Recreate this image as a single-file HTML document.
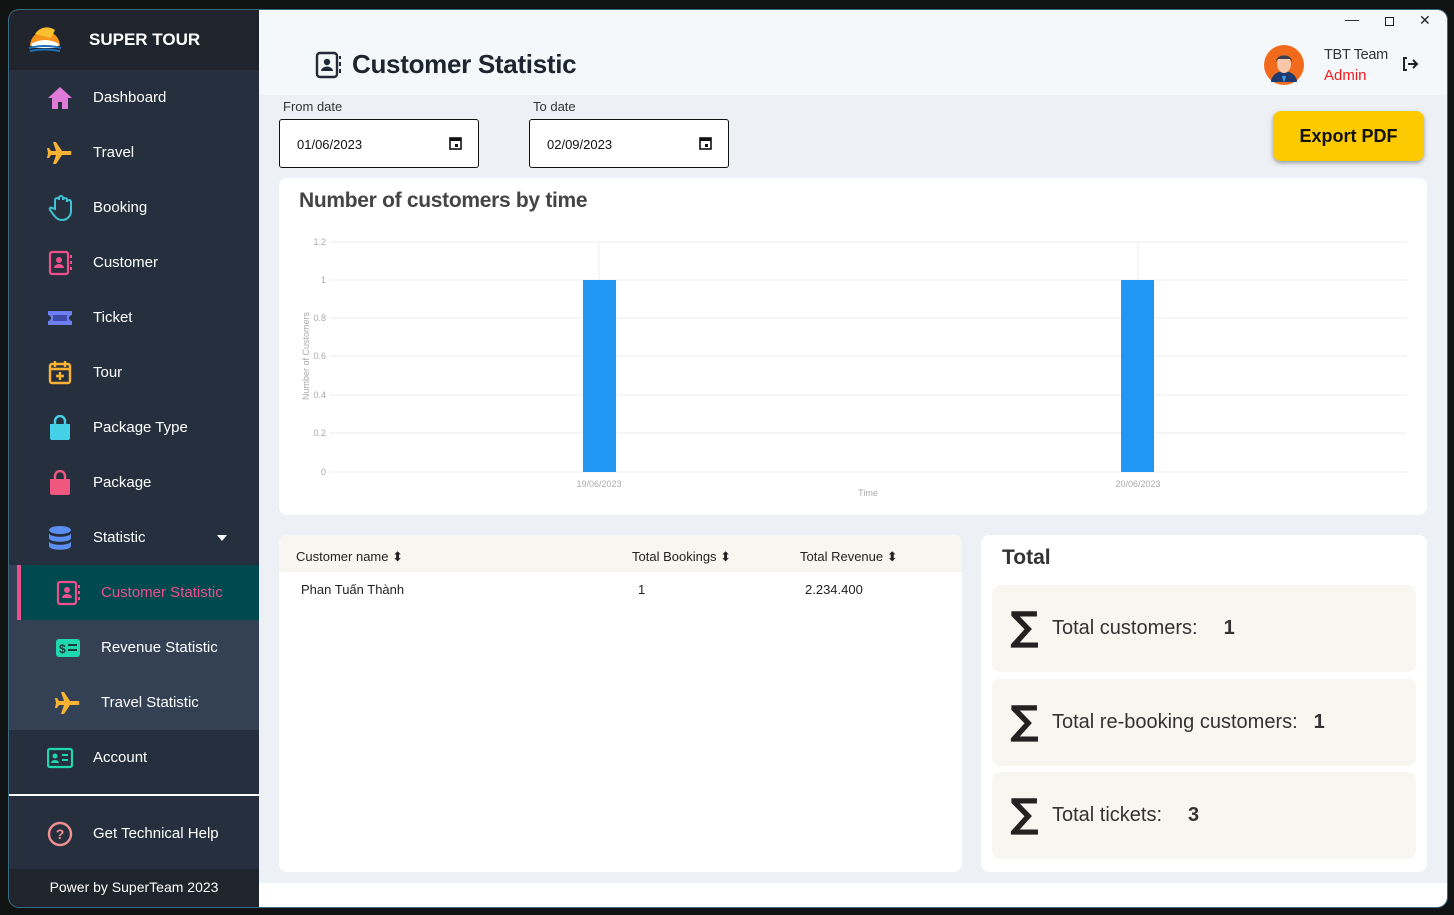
<!DOCTYPE html>
<html><head><meta charset="utf-8"><style>
*{margin:0;padding:0;box-sizing:border-box}
body{width:1454px;height:915px;background:#111313;font-family:"Liberation Sans",sans-serif;position:relative;overflow:hidden}
.a{position:absolute}
.win{left:9px;top:10px;width:1438px;height:897px;border-radius:10px;overflow:hidden;background:#fff;box-shadow:0 -1px 0 0 #3b6a80,0 0 0 1px #3b6a80}
.side{left:0;top:0;width:250px;height:898px;background:#262f3d}
.it{position:absolute;left:0;width:250px;height:55px;color:#fff;font-size:15px;display:flex;align-items:center}
.it svg{position:absolute;left:38px}
.it span{position:absolute;left:84px}
.sub span{left:92px}.sub svg{left:46px}
.sig{font-size:40px;color:#222;font-family:"DejaVu Sans",sans-serif;font-weight:bold}
</style></head><body>
<div class="a win">
 <div class="a side">
  <div class="a" style="left:0;top:-1px;width:250px;height:61px;background:#1f242d"></div>
  <svg class="a" style="left:18px;top:14px" width="36" height="30" viewBox="0 0 36 30"><path d="M3 22A15 15 0 0 1 33 22Z" fill="#f7941d"/><path d="M8 10A14 14 0 0 1 28 6L24 14Z" fill="#fbc02d"/><path d="M4 20Q18 12 32 20L30 24H6Z" fill="#fff"/><path d="M2 24Q18 20 34 24M3 27Q18 24 33 27" stroke="#1e6fb8" stroke-width="2" fill="none"/></svg>
  <div class="a" style="left:80px;top:20px;color:#fff;font-weight:bold;font-size:17px">SUPER TOUR</div>
  <div class="it" style="top:60px"><svg width="26" height="24" viewBox="0 0 26 24"><path d="M13 1L1 12h4v11h6v-7h4v7h6V12h4z" fill="#e07ad8"/></svg><span>Dashboard</span></div>
  <div class="it" style="top:115px"><svg width="26" height="24" viewBox="0 0 26 24"><path d="M1 12h22c2 0 2-2 0-2h-8L9 1H6l3 9H4L2 7H0l1 5-1 5h2l2-3h5l-3 9h3l6-9h8c2 0 2-2 0-2z" fill="#f9b233"/></svg><span>Travel</span></div>
  <div class="it" style="top:170px"><svg width="26" height="26" viewBox="0 0 26 26"><path d="M8 14V5a2 2 0 0 1 4 0V3a2 2 0 0 1 4 0v2a2 2 0 0 1 4 0v2a2 2 0 0 1 4 0v9c0 5-4 9-9 9-4 0-6-2-9-6l-3-4c-1-2 1-3 2-2z" fill="none" stroke="#3ec1d3" stroke-width="2"/></svg><span>Booking</span></div>
  <div class="it" style="top:225px"><svg width="26" height="26" viewBox="0 0 26 26"><rect x="3" y="2" width="18" height="22" rx="2" fill="none" stroke="#ef4f8c" stroke-width="2.2"/><circle cx="12" cy="10" r="3" fill="#ef4f8c"/><path d="M7 18a5 4 0 0 1 10 0z" fill="#ef4f8c"/><path d="M24 5v3M24 11v3M24 17v3" stroke="#ef4f8c" stroke-width="2"/></svg><span>Customer</span></div>
  <div class="it" style="top:280px"><svg width="26" height="24" viewBox="0 0 26 24"><path d="M1 5h24v4a3 3 0 0 0 0 6v4H1v-4a3 3 0 0 0 0-6z" fill="#6c7ef0"/><rect x="6" y="9" width="14" height="6" fill="#3e4aa8"/></svg><span>Ticket</span></div>
  <div class="it" style="top:335px"><svg width="26" height="26" viewBox="0 0 26 26"><rect x="3" y="4" width="20" height="19" rx="2" fill="none" stroke="#f9b233" stroke-width="2.4"/><path d="M8 1v6M18 1v6M3 9h20M13 12v8M9 16h8" stroke="#f9b233" stroke-width="2.4"/></svg><span>Tour</span></div>
  <div class="it" style="top:390px"><svg width="26" height="26" viewBox="0 0 26 26"><path d="M3 9h20v14a2 2 0 0 1-2 2H5a2 2 0 0 1-2-2z" fill="#45d0e8"/><path d="M8 11V6a5 5 0 0 1 10 0v5" stroke="#45d0e8" stroke-width="2.4" fill="none"/></svg><span>Package Type</span></div>
  <div class="it" style="top:445px"><svg width="26" height="26" viewBox="0 0 26 26"><path d="M3 9h20v14a2 2 0 0 1-2 2H5a2 2 0 0 1-2-2z" fill="#f0577f"/><path d="M8 11V6a5 5 0 0 1 10 0v5" stroke="#f0577f" stroke-width="2.4" fill="none"/></svg><span>Package</span></div>
  <div class="it" style="top:500px"><svg width="26" height="26" viewBox="0 0 26 26"><ellipse cx="13" cy="5" rx="11" ry="4" fill="#5b8ef0"/><path d="M2 8c0 5 22 5 22 0v5c0 5-22 5-22 0zM2 16c0 5 22 5 22 0v5c0 5-22 5-22 0z" fill="#5b8ef0"/></svg><span>Statistic</span><div class="a" style="left:208px;top:25px;border:5px solid transparent;border-top:6px solid #fff"></div></div>
  <div class="a" style="left:0;top:555px;width:250px;height:165px;background:#344154"></div>
  <div class="a" style="left:8px;top:555px;width:242px;height:55px;background:#00494f;border-left:4px solid #ef4f8c"></div>
  <div class="it sub" style="top:555px;color:#ef4f8c"><svg width="26" height="26" viewBox="0 0 26 26"><rect x="3" y="2" width="18" height="22" rx="2" fill="none" stroke="#ef4f8c" stroke-width="2.2"/><circle cx="12" cy="10" r="3" fill="#ef4f8c"/><path d="M7 18a5 4 0 0 1 10 0z" fill="#ef4f8c"/><path d="M24 5v3M24 11v3M24 17v3" stroke="#ef4f8c" stroke-width="2"/></svg><span>Customer Statistic</span></div>
  <div class="it sub" style="top:610px"><svg width="26" height="22" viewBox="0 0 26 22"><rect x="1" y="2" width="24" height="18" rx="3" fill="#1fd8b0"/><text x="4" y="16" font-size="12" font-weight="bold" fill="#1b3a3a" font-family="Liberation Sans">$</text><path d="M13 8h9M13 13h9" stroke="#1b3a3a" stroke-width="2"/></svg><span>Revenue Statistic</span></div>
  <div class="it sub" style="top:665px"><svg width="26" height="24" viewBox="0 0 26 24"><path d="M1 12h22c2 0 2-2 0-2h-8L9 1H6l3 9H4L2 7H0l1 5-1 5h2l2-3h5l-3 9h3l6-9h8c2 0 2-2 0-2z" fill="#f9b233"/></svg><span>Travel Statistic</span></div>
  <div class="it" style="top:720px"><svg width="26" height="22" viewBox="0 0 26 22"><rect x="1" y="2" width="24" height="18" rx="2" fill="none" stroke="#1fd8b0" stroke-width="2.2"/><circle cx="8" cy="9" r="2.5" fill="#1fd8b0"/><path d="M4 16a4 3 0 0 1 8 0z" fill="#1fd8b0"/><path d="M15 8h6M15 13h6" stroke="#1fd8b0" stroke-width="2"/></svg><span>Account</span></div>
  <div class="a" style="left:0;top:784px;width:250px;height:2px;background:#fff"></div>
  <div class="it" style="top:796px"><svg width="26" height="26" viewBox="0 0 26 26"><circle cx="13" cy="13" r="11" fill="none" stroke="#f09090" stroke-width="2.4"/><text x="13" y="18" text-anchor="middle" font-size="14" font-weight="bold" fill="#f09090" font-family="Liberation Sans">?</text></svg><span>Get Technical Help</span></div>
  <div class="a" style="left:0;top:859px;width:250px;height:38px;background:#1f242d;color:#fff;font-size:14px;text-align:center;line-height:36px">Power by SuperTeam 2023</div>
 </div>
 <div class="a" style="left:250px;top:-1px;width:1188px;height:86px;background:#f5f8fb"></div>
 <div class="a" style="left:250px;top:85px;width:1188px;height:788px;background:#edf0f4"></div>
 <div class="a" style="left:1336px;top:1px;font-size:14px;color:#222">—</div>
 <div class="a" style="left:1376px;top:7px;width:9px;height:9px;border:1.5px solid #222"></div>
 <div class="a" style="left:1410px;top:2px;font-size:14px;color:#222">✕</div>
 <svg class="a" style="left:306px;top:41px" width="28" height="28" viewBox="0 0 28 28"><rect x="2" y="2" width="20" height="24" rx="3" fill="none" stroke="#222a35" stroke-width="2.4"/><circle cx="12" cy="11" r="3.2" fill="#222a35"/><path d="M6 20a6 4.5 0 0 1 12 0z" fill="#222a35"/><path d="M25 5v3M25 11v4M25 18v4" stroke="#222a35" stroke-width="2"/></svg>
 <div class="a" style="left:343px;top:39px;font-size:26px;font-weight:bold;color:#1e2530;letter-spacing:-0.3px">Customer Statistic</div>
 <svg class="a" style="left:1254px;top:34px" width="42" height="42" viewBox="0 0 42 42"><circle cx="21" cy="21" r="20" fill="#f26a1b"/><path d="M8 38a13 11 0 0 1 26 0z" fill="#1e3a6e"/><path d="M19 32h4l-2 7z" fill="#3aa0f0"/><ellipse cx="21" cy="20" rx="7" ry="9" fill="#f6c7a8"/><path d="M13 18c0-9 16-9 16 0l-2-3h-12z" fill="#3a3f4a"/></svg>
 <div class="a" style="left:1315px;top:37px;font-size:14.5px;color:#333;letter-spacing:-0.3px">TBT Team</div>
 <div class="a" style="left:1315px;top:57px;font-size:15px;color:#f01c1c">Admin</div>
 <svg class="a" style="left:1392px;top:46px" width="18" height="16" viewBox="0 0 18 16"><path d="M6 2H3v12h3" fill="none" stroke="#222" stroke-width="2"/><path d="M7 8h9M12 4l4 4-4 4" fill="none" stroke="#222" stroke-width="2"/></svg>
 <div class="a" style="left:274px;top:89px;font-size:13px;color:#333">From date</div>
 <div class="a" style="left:524px;top:89px;font-size:13px;color:#333">To date</div>
 <div class="a" style="left:270px;top:109px;width:200px;height:49px;border:1px solid #111;border-radius:3px;background:#fff;font-size:13px;padding:17px 0 0 17px;color:#111">01/06/2023</div>
 <div class="a" style="left:520px;top:109px;width:200px;height:49px;border:1px solid #111;border-radius:3px;background:#fff;font-size:13px;padding:17px 0 0 17px;color:#111">02/09/2023</div>
 <svg class="a" style="left:440px;top:126px" width="13" height="14" viewBox="0 0 13 14"><rect x="1" y="2" width="11" height="11" fill="none" stroke="#111" stroke-width="1.6"/><rect x="1" y="2" width="11" height="3" fill="#111"/><rect x="6" y="8" width="3" height="3" fill="#111"/></svg>
 <svg class="a" style="left:690px;top:126px" width="13" height="14" viewBox="0 0 13 14"><rect x="1" y="2" width="11" height="11" fill="none" stroke="#111" stroke-width="1.6"/><rect x="1" y="2" width="11" height="3" fill="#111"/><rect x="6" y="8" width="3" height="3" fill="#111"/></svg>
 <div class="a" style="left:1264px;top:101px;width:151px;height:50px;background:#fdca00;border-radius:8px;box-shadow:0 2px 4px rgba(0,0,0,.35);font-size:18px;font-weight:bold;color:#111;text-align:center;line-height:50px">Export PDF</div>
 <div class="a" style="left:270px;top:168px;width:1148px;height:337px;background:#fff;border-radius:8px"></div>
 <div class="a" style="left:290px;top:179px;font-size:21px;font-weight:bold;color:#444;letter-spacing:-0.3px">Number of customers by time</div>
 <svg class="a" style="left:270px;top:168px" width="1148" height="337" viewBox="270 168 1148 337" font-family="Liberation Sans">
  <g stroke="#eee" stroke-width="1"><path d="M321 232H1398M321 270H1398M321 308H1398M321 346H1398M321 385H1398M321 423H1398M321 462H1398M590 232V462M1129 232V462"/></g>
  <g fill="#aaa" font-size="9" text-anchor="end"><text x="317" y="235">1.2</text><text x="317" y="273">1</text><text x="317" y="311">0.8</text><text x="317" y="349">0.6</text><text x="317" y="388">0.4</text><text x="317" y="426">0.2</text><text x="317" y="465">0</text></g>
  <text transform="translate(300,346) rotate(-90)" font-size="9" fill="#aaa" text-anchor="middle">Number of Customers</text>
  <rect x="574" y="270" width="33" height="192" fill="#2196f3"/><rect x="1112" y="270" width="33" height="192" fill="#2196f3"/>
  <g fill="#aaa" font-size="9" text-anchor="middle"><text x="590" y="477">19/06/2023</text><text x="1129" y="477">20/06/2023</text><text x="859" y="486">Time</text></g>
 </svg>
 <div class="a" style="left:270px;top:525px;width:683px;height:337px;background:#fff;border-radius:8px;overflow:hidden">
  <div style="height:37px;background:#f8f6f0;font-size:13px;color:#222;position:relative">
   <span class="a" style="left:17px;top:14px">Customer name ⬍</span><span class="a" style="left:353px;top:14px">Total Bookings ⬍</span><span class="a" style="left:521px;top:14px">Total Revenue ⬍</span>
  </div>
  <div style="position:relative;font-size:13px;color:#222"><span class="a" style="left:22px;top:10px">Phan Tuấn Thành</span><span class="a" style="left:359px;top:10px">1</span><span class="a" style="left:526px;top:10px">2.234.400</span></div>
 </div>
 <div class="a" style="left:972px;top:525px;width:446px;height:337px;background:#fff;border-radius:8px">
  <div class="a" style="left:21px;top:11px;font-size:21px;font-weight:bold;color:#333">Total</div>
  <div class="a" style="left:11px;top:50px;width:424px;height:87px;background:#f8f6f0;border-radius:8px"></div>
  <div class="a" style="left:11px;top:144px;width:424px;height:87px;background:#f8f6f0;border-radius:8px"></div>
  <div class="a" style="left:11px;top:237px;width:424px;height:87px;background:#f8f6f0;border-radius:8px"></div>
  <div class="a sig" style="left:29px;top:69px">∑</div><div class="a" style="left:71px;top:82px;font-size:20px;color:#333">Total customers:<span style="margin-left:26px;font-weight:bold">1</span></div>
  <div class="a sig" style="left:29px;top:163px">∑</div><div class="a" style="left:71px;top:176px;font-size:20px;color:#333">Total re-booking customers:<span style="margin-left:16px;font-weight:bold">1</span></div>
  <div class="a sig" style="left:29px;top:256px">∑</div><div class="a" style="left:71px;top:269px;font-size:20px;color:#333">Total tickets:<span style="margin-left:26px;font-weight:bold">3</span></div>
 </div>
</div>
</body></html>
